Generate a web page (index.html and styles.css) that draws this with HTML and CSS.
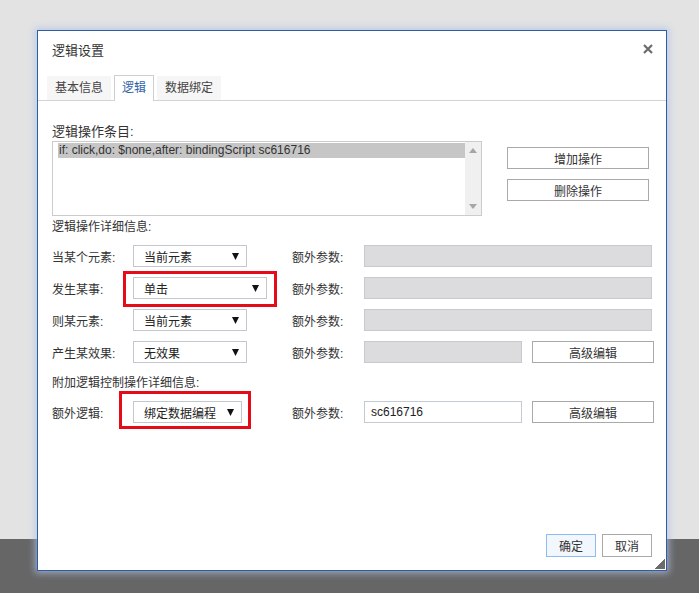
FILE: index.html
```html
<!DOCTYPE html>
<html lang="zh-CN">
<head>
<meta charset="utf-8">
<title>逻辑设置</title>
<link rel="stylesheet" href="styles.css">
</head>
<body>
<div class="page">
  <div class="page-top"></div>
  <div class="page-bottom"></div>
</div>
<div class="dialog">
  <div class="dlg-head">
    <span class="dlg-title">逻辑设置</span>
    <span class="close"><svg width="10" height="10" viewBox="0 0 10 10"><path d="M1 1 L9 9 M9 1 L1 9" stroke="#6b6b6b" stroke-width="2.2" fill="none"/></svg></span>
  </div>
  <div class="tabs">
    <span class="tab">基本信息</span>
    <span class="tab active">逻辑</span>
    <span class="tab">数据绑定</span>
  </div>
  <div class="dlg-body">
    <div class="sec-label first">逻辑操作条目:</div>
    <div class="list-row">
      <div class="listbox">
        <div class="list-items">
          <div class="item sel">if: click,do: $none,after: bindingScript sc616716</div>
        </div>
        <div class="scrollbar">
          <svg class="arr" width="8" height="5" viewBox="0 0 8 5"><polygon points="0,5 8,5 4,0" fill="#a6a6a6"/></svg>
          <svg class="arr" width="8" height="5" viewBox="0 0 8 5"><polygon points="0,0 8,0 4,5" fill="#a6a6a6"/></svg>
        </div>
      </div>
      <div class="list-actions">
        <span class="btn wide">增加操作</span>
        <span class="btn wide">删除操作</span>
      </div>
    </div>
    <div class="sec-label">逻辑操作详细信息:</div>
    <div class="form-row">
      <span class="lbl">当某个元素:</span>
      <span class="cell"><span class="select w114"><span>当前元素</span><svg width="7" height="7" viewBox="0 0 7 7"><polygon points="0,0 7,0 3.5,7" fill="#111"/></svg></span></span>
      <span class="lbl2">额外参数:</span>
      <span class="input disabled full"></span>
    </div>
    <div class="form-row">
      <span class="lbl">发生某事:</span>
      <span class="cell"><span class="select w134"><span>单击</span><svg width="7" height="7" viewBox="0 0 7 7"><polygon points="0,0 7,0 3.5,7" fill="#111"/></svg></span><span class="mark m1"></span></span>
      <span class="lbl2">额外参数:</span>
      <span class="input disabled full"></span>
    </div>
    <div class="form-row">
      <span class="lbl">则某元素:</span>
      <span class="cell"><span class="select w114"><span>当前元素</span><svg width="7" height="7" viewBox="0 0 7 7"><polygon points="0,0 7,0 3.5,7" fill="#111"/></svg></span></span>
      <span class="lbl2">额外参数:</span>
      <span class="input disabled full"></span>
    </div>
    <div class="form-row">
      <span class="lbl">产生某效果:</span>
      <span class="cell"><span class="select w114"><span>无效果</span><svg width="7" height="7" viewBox="0 0 7 7"><polygon points="0,0 7,0 3.5,7" fill="#111"/></svg></span></span>
      <span class="lbl2">额外参数:</span>
      <span class="input disabled half"></span>
      <span class="btn adv">高级编辑</span>
    </div>
    <div class="sec-label third">附加逻辑控制操作详细信息:</div>
    <div class="form-row">
      <span class="lbl">额外逻辑:</span>
      <span class="cell"><span class="select w109"><span>绑定数据编程</span><svg width="7" height="7" viewBox="0 0 7 7"><polygon points="0,0 7,0 3.5,7" fill="#111"/></svg></span><span class="mark m2"></span></span>
      <span class="lbl2">额外参数:</span>
      <span class="input half">sc616716</span>
      <span class="btn adv">高级编辑</span>
    </div>
  </div>
  <div class="dlg-foot">
    <span class="btn ok">确定</span>
    <span class="btn cancel">取消</span>
  </div>
  <span class="grip"></span>
</div>
</body>
</html>
```
FILE: styles.css
```css
* { box-sizing: border-box; }
html, body { margin: 0; padding: 0; }
body {
  width: 699px;
  height: 593px;
  overflow: hidden;
  font-family: "Liberation Sans", "Noto Sans CJK SC", sans-serif;
  font-size: 12px;
  color: #333;
  position: relative;
}
.page { display: flex; flex-direction: column; height: 593px; }
.page-top { height: 539px; background: #e3e3e3; }
.page-bottom { flex: 1; background: #666666; }

.dialog {
  position: absolute;
  left: 37px;
  top: 30px;
  width: 630px;
  height: 541px;
  background: #fff;
  border: 1px solid #2e5ca6;
  box-shadow: 0 0 7px 2px rgba(175, 195, 230, 0.75);
  display: flex;
  flex-direction: column;
}
.dlg-head {
  height: 44px;
  display: flex;
  justify-content: space-between;
  align-items: flex-start;
  padding: 11px 13px 0 14px;
}
.dlg-title { font-size: 13px; line-height: 18px; color: #333; }
.close { display: flex; width: 10px; height: 10px; margin-top: 2px; }

.tabs {
  height: 26px;
  display: flex;
  align-items: flex-end;
  gap: 3px;
  padding-left: 9px;
  border-bottom: 1px solid #d4d4d4;
}
.tab {
  height: 24px;
  line-height: 24px;
  padding: 0 8px;
  background: #f6f6f6;
  color: #444;
}
.tab.active {
  height: 26px;
  line-height: 25px;
  margin-bottom: -1px;
  background: #fff;
  border: 1px solid #cfcfcf;
  border-bottom: none;
  padding: 0 7px;
  color: #2f63a8;
}

.dlg-body {
  flex: 1;
  padding: 21px 0 0 14px;
  display: flex;
  flex-direction: column;
}
.sec-label { line-height: 20px; height: 20px; margin-top: 1px; }
.sec-label.first { line-height: 19px; height: 19px; margin-top: 0; font-size: 13px; }
.sec-label.third { margin-top: 5px; }

.list-row { display: flex; align-items: flex-start; gap: 25px; }
.listbox {
  width: 430px;
  height: 75px;
  border: 1px solid #cccccc;
  display: flex;
}
.list-items { flex: 1; padding: 1px 0 0 5px; }
.item { line-height: 15px; height: 15px; padding-left: 1px; }
.item.sel { background: #c6c6c6; color: #333; }
.scrollbar {
  width: 16px;
  background: #f0f0f0;
  display: flex;
  flex-direction: column;
  justify-content: space-between;
  align-items: center;
  padding: 6px 0 6px;
}
.arr { display: block; }
.list-actions {
  display: flex;
  flex-direction: column;
  gap: 10px;
  padding-top: 6px;
}
.btn {
  display: flex;
  align-items: center;
  justify-content: center;
  height: 22px;
  border: 1px solid #a9a9a9;
  background: #fff;
  color: #333;
}
.btn.wide { width: 142px; }

.form-row {
  height: 32px;
  display: flex;
  align-items: center;
}
.form-row:first-of-type { margin-top: 0; }
.sec-label + .form-row { margin-top: 3px; }
.lbl { width: 81px; }
.cell { width: 159px; position: relative; display: flex; align-items: center; }
.lbl2 { width: 72px; }
.select {
  height: 22px;
  border: 1px solid #c3c8ce;
  display: flex;
  align-items: center;
  justify-content: space-between;
  padding: 1px 7px 0 10px;
  background: #fff;
  color: #222;
}
.select svg { display: block; }
.w114 { width: 114px; }
.w134 { width: 134px; }
.w109 { width: 109px; }
.input {
  height: 22px;
  border: 1px solid #c3cad4;
  background: #fff;
  display: flex;
  align-items: center;
  padding-left: 6px;
  color: #222;
}
.input.disabled { background: #dcdcdc; }
.input.full { width: 288px; }
.input.half { width: 158px; }
.btn.adv { width: 122px; margin-left: 10px; }

.mark {
  position: absolute;
  border: 3px solid #e60b18;
  pointer-events: none;
}
.m1 { left: -10px; top: -6px; width: 154px; height: 36px; }
.m2 { left: -14px; top: -10px; width: 132px; height: 38px; }

.dlg-foot {
  display: flex;
  justify-content: flex-end;
  gap: 6px;
  padding: 0 14px 13px 0;
}
.btn.ok { width: 50px; height: 23px; background: #f2f7fd; border-color: #8fbcef; }
.btn.cancel { width: 50px; height: 23px; }

.grip {
  position: absolute;
  right: 1px;
  bottom: 1px;
  width: 10px;
  height: 10px;
  background: linear-gradient(135deg, transparent 50%, #6b6b6b 50%);
}
```
